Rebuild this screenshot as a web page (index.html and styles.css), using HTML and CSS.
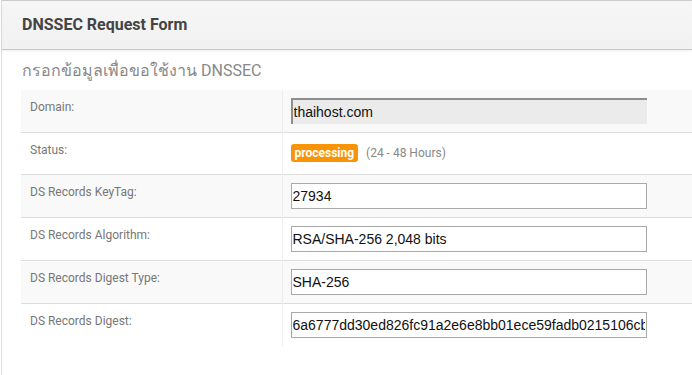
FILE: index.html
```html
<!DOCTYPE html>
<html lang="th">
<head>
    <meta charset="UTF-8">
    <meta name="viewport" content="width=device-width, initial-scale=1.0">
    <title>DNSSEC Request Form</title>
    <link rel="stylesheet" href="styles.css">
</head>
<body>
    <div class="panel">
        <div class="panel-heading">
            <h3>DNSSEC Request Form</h3>
        </div>
        <div class="panel-body">
            <p class="subtitle">กรอกข้อมูลเพื่อขอใช้งาน DNSSEC</p>
            <table class="form-table">
                <tr>
                    <td class="label-cell">Domain:</td>
                    <td class="value-cell"><input type="text" class="field readonly" value="thaihost.com" readonly></td>
                </tr>
                <tr>
                    <td class="label-cell">Status:</td>
                    <td class="value-cell status-cell">
                        <span class="badge">processing</span>
                        <span class="note">(24 - 48 Hours)</span>
                    </td>
                </tr>
                <tr>
                    <td class="label-cell">DS Records KeyTag:</td>
                    <td class="value-cell"><input type="text" class="field" value="27934"></td>
                </tr>
                <tr>
                    <td class="label-cell">DS Records Algorithm:</td>
                    <td class="value-cell"><input type="text" class="field" value="RSA/SHA-256 2,048 bits"></td>
                </tr>
                <tr>
                    <td class="label-cell">DS Records Digest Type:</td>
                    <td class="value-cell"><input type="text" class="field" value="SHA-256"></td>
                </tr>
                <tr>
                    <td class="label-cell">DS Records Digest:</td>
                    <td class="value-cell"><input type="text" class="field" value="6a6777dd30ed826fc91a2e6e8bb01ece59fadb0215106cb1f3e2a7d4c9b8e05a"></td>
                </tr>
            </table>
        </div>
    </div>
</body>
</html>
```

FILE: styles.css
```css
* {
    margin: 0;
    padding: 0;
    box-sizing: border-box;
}

body {
    background: white;
    font-family: Roboto, 'Noto Sans', sans-serif;
    padding-left: 1px;
}

.panel {
    height: 100vh;
    border-top: 1px solid #ccc;
    border-left: 1px solid #ddd;
    background: white;
}

.panel-heading {
    height: 49px;
    padding: 0 20px;
    display: flex;
    align-items: center;
    background: linear-gradient(#f6f6f6, #f1f1f1);
    border-bottom: 1px solid #c8c8c8;
    box-shadow: 0 1px 2px rgba(0,0,0,0.08);
}

.panel-heading h3 {
    font-size: 16px;
    font-weight: bold;
    color: #444;
    padding-bottom: 1px;
}

.panel-body {
    padding: 10px 0 0 19px;
}

.subtitle {
    font-size: 16px;
    line-height: 22px;
    color: #888;
    margin-bottom: 8px;
    padding-left: 1px;
}

.form-table {
    width: 100%;
    border-collapse: collapse;
}

.form-table tr:nth-child(odd) {
    background: #f9f9f9;
}

.form-table tr + tr td {
    border-top: 1px solid #ddd;
}

.label-cell {
    width: 261px;
    padding: 9px 9px;
    font-size: 12px;
    line-height: 17px;
    color: #777;
    vertical-align: top;
    border-right: 1px solid #eee;
}

.value-cell {
    padding: 8px 8px;
    height: 42px;
    vertical-align: top;
}

.field {
    display: block;
    width: 356px;
    height: 26px;
    padding: 1px 1px;
    font-family: 'Liberation Sans', Arial, sans-serif;
    font-size: 14px;
    color: #111;
    background: white;
    border: 1px solid #a9a9a9;
    outline: none;
}

.field.readonly {
    background: #ebebeb;
    border-width: 2px 0 0 2px;
    border-style: solid;
    border-color: #8e8e8e;
    padding-top: 1px;
}

.status-cell {
    padding-top: 9px;
}

.badge {
    display: inline-block;
    background: #f89406;
    color: white;
    font-size: 12px;
    font-weight: bold;
    line-height: 18px;
    padding: 0 4px;
    border-radius: 3px;
}

.note {
    font-size: 12px;
    color: #888;
    margin-left: 4px;
}
```
